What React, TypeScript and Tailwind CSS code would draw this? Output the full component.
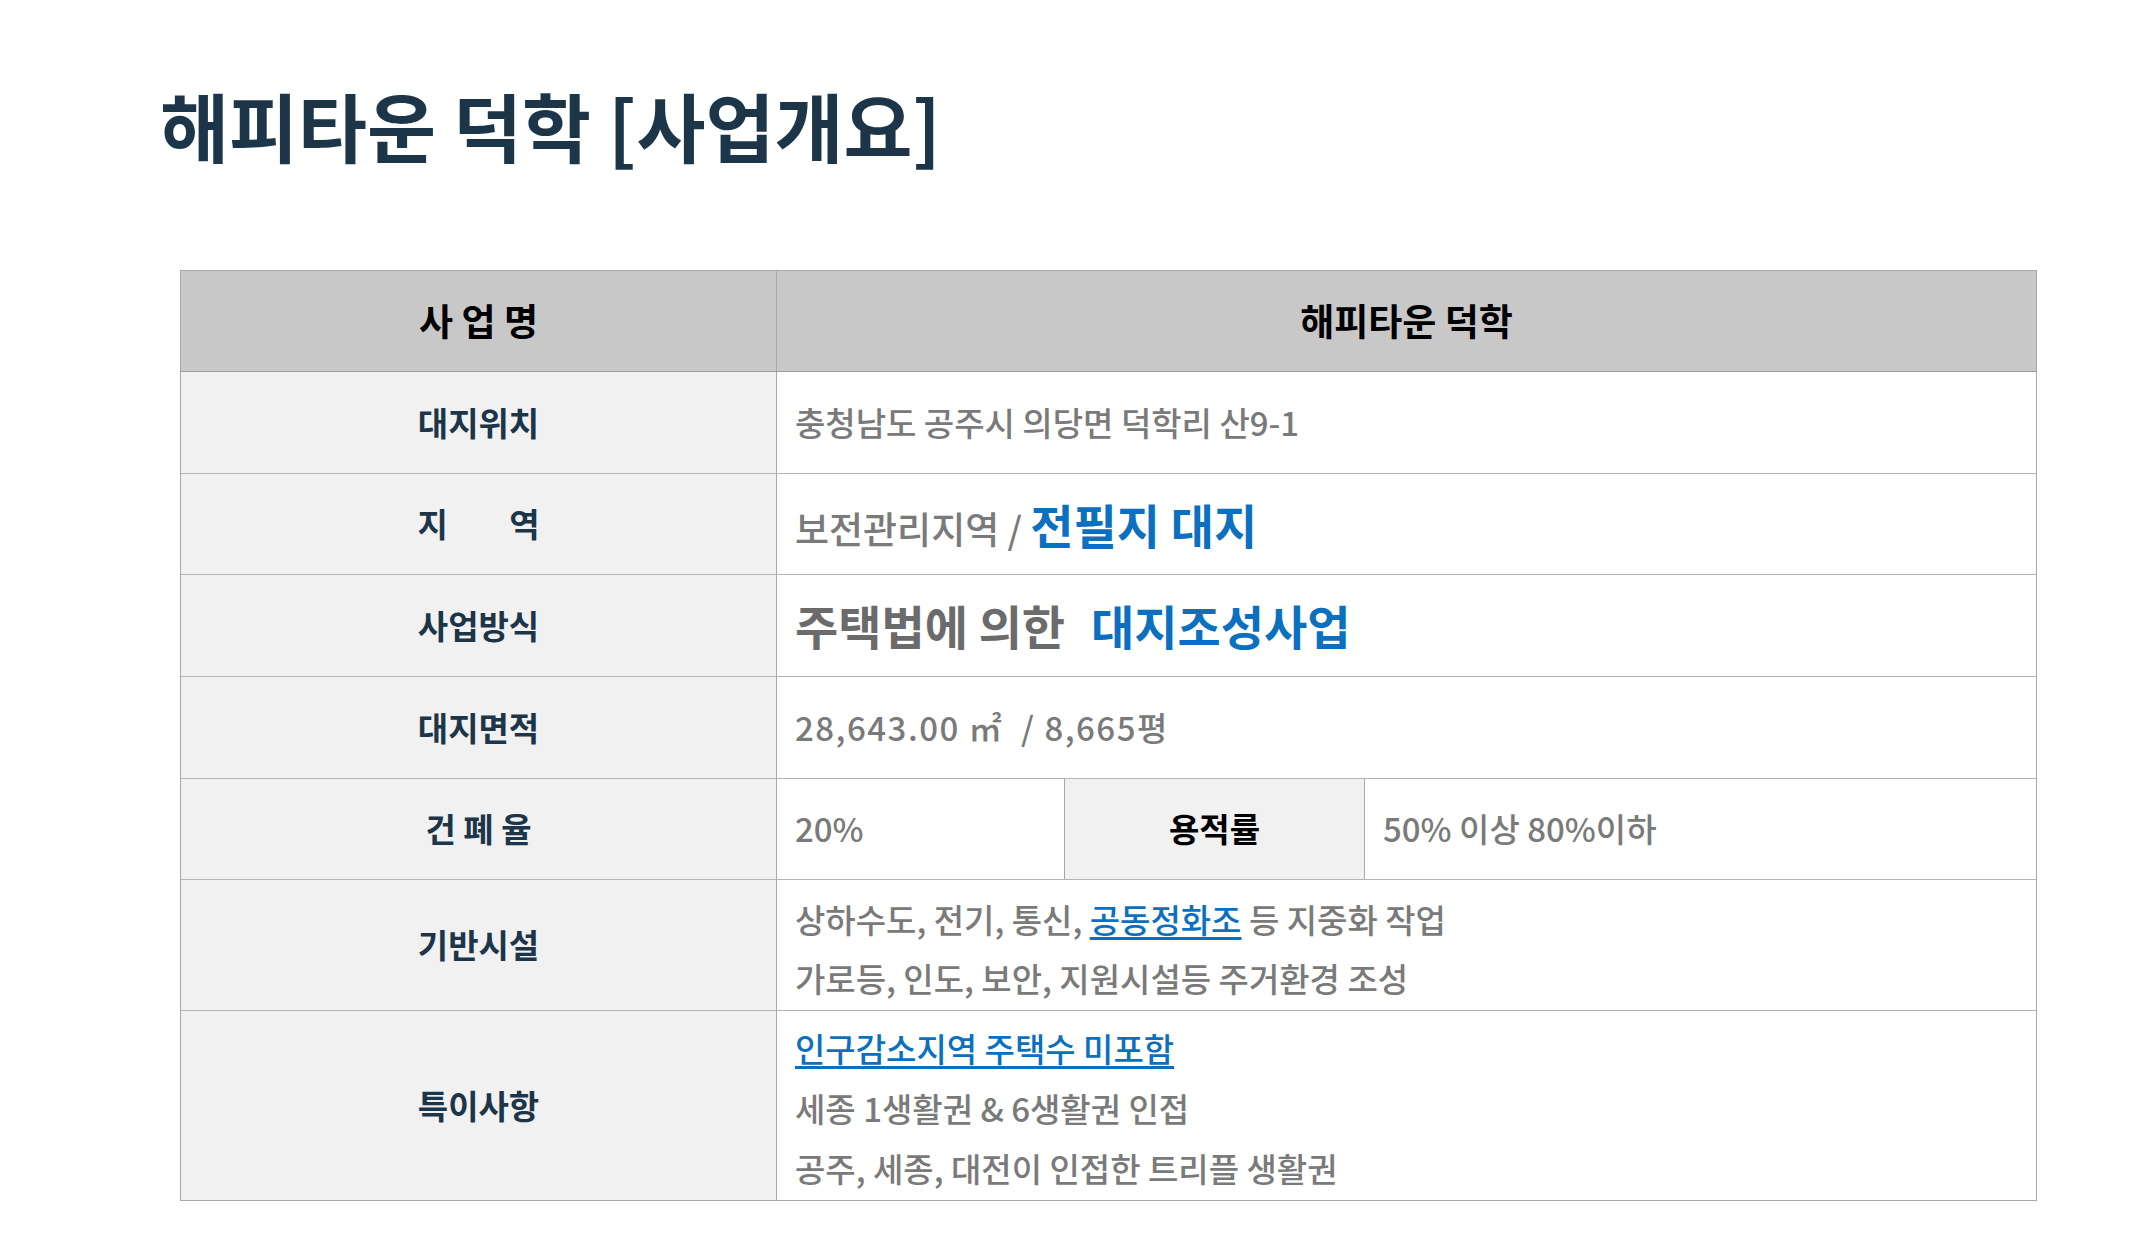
const font = { fontFamily: '"Noto Sans CJK KR", "Noto Sans", sans-serif' };

function Label({ children, dark }: { children: React.ReactNode; dark?: boolean }) {
  return (
    <div
      className={`flex w-[596px] shrink-0 items-center justify-center border-r border-[#a8a8a8] bg-[#f1f1f1] text-[33px] font-bold ${
        dark ? 'text-black' : 'text-[#1c3548]'
      }`}
    >
      {children}
    </div>
  );
}

function Value({ children, className = '' }: { children: React.ReactNode; className?: string }) {
  return (
    <div className={`flex flex-1 flex-col justify-center px-[18px] text-[33px] font-medium text-[#7a7a7a] ${className}`}>
      {children}
    </div>
  );
}

export default function App() {
  return (
    <div className="min-h-screen bg-white" style={font}>
      <h1 className="pl-[160px] pt-[87px] text-[75px] font-bold leading-none text-[#1c3548]">
        해피타운 덕학 [사업개요]
      </h1>

      <div className="ml-[180px] mt-[108px] w-[1857px] border border-[#a8a8a8]">
        {/* header */}
        <div className="flex h-[101px] border-b border-[#9e9e9e] bg-[#c8c8c8] text-[37px] font-bold text-black">
          <div className="flex w-[596px] shrink-0 items-center justify-center border-r border-[#a8a8a8]">
            사 업 명
          </div>
          <div className="flex flex-1 items-center justify-center">해피타운 덕학</div>
        </div>

        <div className="flex h-[102px] border-b border-[#b4b4b4]">
          <Label>대지위치</Label>
          <Value>충청남도 공주시 의당면 덕학리 산9-1</Value>
        </div>

        <div className="flex h-[101px] border-b border-[#b4b4b4]">
          <Label>
            <span className="flex w-[122px] justify-between">
              <span>지</span>
              <span>역</span>
            </span>
          </Label>
          <Value>
            <div className="flex items-baseline">
              <span className="text-[37px]">보전관리지역 /&nbsp;</span>
              <span className="text-[47px] font-bold text-[#0b70c0]">전필지 대지</span>
            </div>
          </Value>
        </div>

        <div className="flex h-[102px] border-b border-[#b4b4b4]">
          <Label>사업방식</Label>
          <Value>
            <div className="flex items-baseline text-[47px] font-bold">
              <span className="text-[#6b6b6b]">주택법에 의한</span>
              <span className="ml-[26px] text-[#0b70c0]">대지조성사업</span>
            </div>
          </Value>
        </div>

        <div className="flex h-[102px] border-b border-[#b4b4b4]">
          <Label>대지면적</Label>
          <Value>
            <div className="tracking-[1.5px]">
              28,643.00 ㎡ &nbsp;/ 8,665평
            </div>
          </Value>
        </div>

        <div className="flex h-[101px] border-b border-[#b4b4b4]">
          <Label>건 폐 율</Label>
          <div className="flex w-[288px] shrink-0 items-center border-r border-[#a8a8a8] px-[18px] text-[33px] font-medium text-[#7a7a7a]">
            20%
          </div>
          <div className="flex w-[300px] shrink-0 items-center justify-center border-r border-[#a8a8a8] bg-[#f1f1f1] text-[33px] font-bold text-black">
            용적률
          </div>
          <div className="flex flex-1 items-center px-[18px] text-[33px] font-medium text-[#7a7a7a]">
            50% 이상 80%이하
          </div>
        </div>

        <div className="flex h-[131px] border-b border-[#b4b4b4]">
          <Label>기반시설</Label>
          <Value className="pt-[8px]">
            <div className="leading-[59px]">
              상하수도, 전기, 통신,{' '}
              <span className="text-[#0b70c0] underline underline-offset-4">공동정화조</span> 등 지중화 작업
            </div>
            <div className="leading-[59px]">가로등, 인도, 보안, 지원시설등 주거환경 조성</div>
          </Value>
        </div>

        <div className="flex h-[189px]">
          <Label>특이사항</Label>
          <Value className="pt-[5px]">
            <div className="leading-[60px]">
              <span className="text-[#0b70c0] underline underline-offset-4">인구감소지역 주택수 미포함</span>
            </div>
            <div className="leading-[60px]">세종 1생활권 &amp; 6생활권 인접</div>
            <div className="leading-[60px]">공주, 세종, 대전이 인접한 트리플 생활권</div>
          </Value>
        </div>
      </div>
    </div>
  );
}
